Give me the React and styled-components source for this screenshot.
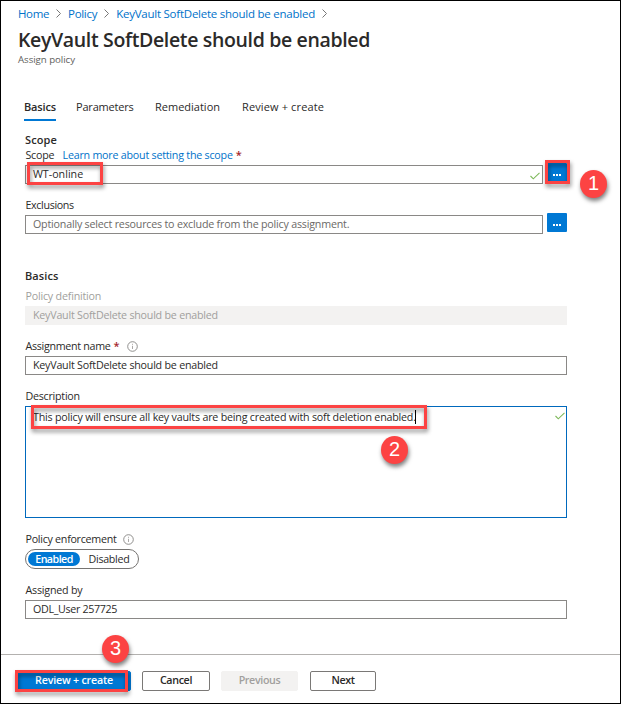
import React from 'react';
import styled, { createGlobalStyle, css } from 'styled-components';

const Global = createGlobalStyle`
  * { box-sizing: border-box; }
  body { margin: 0; background: #fff; }
`;

const Page = styled.main`
  width: 621px;
  height: 704px;
  border: 1px solid #000;
  overflow: hidden;
  display: flex;
  flex-direction: column;
  background: #fff;
  color: #2b2a29;
  font: 10.7px "Open Sans", "Noto Sans", sans-serif;
  white-space: nowrap;
`;

const Text = styled.span`
  letter-spacing: ${(p) => p.$track ?? -0.22}px;
  ${(p) => p.$color && css`color: ${p.$color};`}
`;

const Header = styled.header`
  padding: 3px 17px 0;
`;

const Breadcrumb = styled.nav`
  display: flex;
  align-items: center;
  height: 18px;
  font-size: 11.5px;
  color: #0072c9;
`;

const Separator = styled.svg`
  width: 5px;
  height: 9px;
  margin: 0 7px;
  fill: none;
  stroke: #777;
  stroke-width: 1;
`;

const Title = styled.h1`
  margin: 5px 0 0;
  height: 26px;
  line-height: 26px;
  font-size: 19.5px;
  font-weight: 600;
  letter-spacing: -0.35px;
`;

const Subtitle = styled.div`
  height: 14px;
  line-height: 14px;
  font-size: 9.7px;
  letter-spacing: -0.05px;
  color: #605e5c;
`;

const Tabs = styled.div`
  display: flex;
  gap: 20px;
  margin: 31px 0 0 23px;
`;

const Tab = styled.div`
  height: 23px;
  width: ${(p) => p.$width}px;
  line-height: 18px;
  font-size: 11px;
  font-weight: ${(p) => (p.$active ? 600 : 400)};
  border-bottom: 2px solid ${(p) => (p.$active ? '#0078d4' : 'transparent')};
`;

const Form = styled.section`
  padding: 11px 53px 0 24px;
`;

const SectionHeading = styled.h2`
  margin: ${(p) => p.$top ?? 0}px 0 0;
  height: 16px;
  line-height: 16px;
  font-size: 11px;
  font-weight: 600;
  letter-spacing: 0.1px;
`;

const Label = styled.div`
  display: flex;
  align-items: center;
  height: 14px;
  margin: ${(p) => p.$top ?? 14}px 0 3px;
  padding-left: 0.5px;
  line-height: 14px;
`;

const Required = styled.span`
  margin-left: 3px;
  color: #a4262c;
  font-size: 11px;
  font-weight: 600;
  line-height: 14px;
`;

const Info = styled.svg`
  width: 11px;
  height: 11px;
  margin-left: ${(p) => p.$gap}px;
  fill: none;
  stroke: #858381;
`;

const FieldRow = styled.div`
  display: flex;
  gap: 4px;
  position: relative;
`;

const Field = styled.div`
  flex: 1;
  display: flex;
  align-items: center;
  justify-content: space-between;
  height: 19px;
  padding: 0 2px 0 7px;
  border: 1px solid #8a8886;
  line-height: 15px;
  ${(p) => p.$disabled && css`
    background: #f3f2f1;
    border-color: #f3f2f1;
    color: #a19f9d;
  `}
`;

const TextArea = styled.div`
  position: relative;
  display: flex;
  align-items: flex-start;
  justify-content: space-between;
  height: 112px;
  padding: 3px 1px 0 7px;
  border: 1px solid #0069bd;
  line-height: 15px;
`;

const Caret = styled.i`
  display: inline-block;
  width: 1px;
  height: 14px;
  margin-left: -1px;
  vertical-align: top;
  background: #000;
`;

const Check = styled.svg`
  width: 10px;
  height: 8px;
  margin-top: ${(p) => p.$top ?? 2}px;
  fill: none;
  stroke: #7fb95b;
  stroke-width: 1.1;
`;

const Browse = styled.div`
  display: flex;
  align-items: center;
  justify-content: center;
  gap: 1px;
  width: 20px;
  height: 19px;
  margin-top: -2px;
  padding-top: 5px;
  background: #0078d4;
  border-radius: 1px;
`;

const Dot = styled.i`
  width: 2px;
  height: 2px;
  background: #fff;
`;

const Toggle = styled.div`
  display: flex;
  align-items: center;
  gap: 2px;
  width: 114px;
  height: 20px;
  padding: 0 2px;
  border: 1px solid #767472;
  border-radius: 10px;
`;

const ToggleOption = styled.div`
  width: ${(p) => p.$width}px;
  height: 14px;
  line-height: 14px;
  border-radius: 7px;
  text-align: center;
  ${(p) => p.$on && css`
    background: #0078d4;
    color: #fff;
    font-weight: 600;
  `}
`;

const Footer = styled.footer`
  position: relative;
  display: flex;
  height: 49px;
  margin-top: 35px;
  padding: 16px 0 0 16px;
  border-top: 1px solid #b3b1af;
`;

const variants = {
  primary: css`background: #0078d4; border-color: #0078d4; color: #fff;`,
  normal: css`background: #fff; border-color: #7a7876; color: #2b2a29;`,
  disabled: css`background: #f3f2f1; border-color: #f3f2f1; color: #a19f9d;`,
};

const Button = styled.button`
  width: ${(p) => p.$width}px;
  height: 20px;
  margin: 0 ${(p) => p.$gap ?? 0}px 0 0;
  padding: 0 0 1px;
  border: 1px solid;
  border-radius: 2px;
  font: 600 10.7px/17px "Open Sans", "Noto Sans", sans-serif;
  ${(p) => variants[p.$variant || 'normal']}
`;

const Highlight = styled.div`
  position: absolute;
  z-index: 1;
  left: ${(p) => p.$x}px;
  top: ${(p) => p.$y}px;
  width: ${(p) => p.$w}px;
  height: ${(p) => p.$h}px;
  border: 3px solid #fc4343;
  filter: drop-shadow(1px 3px 2px rgba(0, 0, 0, 0.45));
`;

const Step = styled.div`
  position: absolute;
  z-index: 2;
  left: ${(p) => p.$x}px;
  top: ${(p) => p.$y}px;
  width: 27px;
  height: 28px;
  border-radius: 50%;
  background: #fc4343;
  color: #fff;
  font: 20px/27px "Liberation Sans", Arial, sans-serif;
  text-align: center;
  box-shadow: 1px 3px 4px rgba(0, 0, 0, 0.5);
`;

const Chevron = () => (
  <Separator viewBox="0 0 5 9"><path d="M.5 .5 4.5 4.5 .5 8.5" /></Separator>
);

const Valid = ({ top }) => (
  <Check $top={top} viewBox="0 0 10 8"><path d="M.5 4 3.3 6.8 9.5 .8" /></Check>
);

const InfoIcon = ({ gap }) => (
  <Info $gap={gap} viewBox="0 0 11 11">
    <circle cx="5.5" cy="5.5" r="4.8" strokeWidth=".9" />
    <path d="M5.5 4.8V8M5.5 2.8V3.8" strokeWidth=".7" />
  </Info>
);

const BrowseButton = () => <Browse><Dot /><Dot /><Dot /></Browse>;

export default function App() {
  return (
    <Page>
      <Global />
      <Header>
        <Breadcrumb>
          <Text $track={-0.37}>Home</Text><Chevron />
          <Text $track={-0.3}>Policy</Text><Chevron />
          <Text $track={-0.24}>KeyVault SoftDelete should be enabled</Text><Chevron />
        </Breadcrumb>
        <Title>KeyVault SoftDelete should be enabled</Title>
        <Subtitle>Assign policy</Subtitle>
      </Header>

      <Tabs>
        <Tab $active $width={32}><Text $track={-0.15}>Basics</Text></Tab>
        <Tab $width={59}><Text $track={-0.2}>Parameters</Text></Tab>
        <Tab $width={67}><Text $track={0}>Remediation</Text></Tab>
        <Tab $width={83}><Text $track={0.13}>Review + create</Text></Tab>
      </Tabs>

      <Form>
        <SectionHeading>Scope</SectionHeading>
        <Label $top={0}>
          <Text $track={-0.25}>Scope</Text>
          &nbsp;&nbsp;&nbsp;
          <Text $color="#0072c9">Learn more about setting the scope</Text>
          <Required>*</Required>
        </Label>
        <FieldRow>
          <Field><Text $track={0}>WT-online</Text><Valid /></Field>
          <BrowseButton />
          <Highlight $x={2} $y={-3} $w={76} $h={23} />
          <Highlight $x={520} $y={-5} $w={25} $h={24} />
          <Step $x={555} $y={5}>1</Step>
        </FieldRow>

        <Label><Text $track={-0.35}>Exclusions</Text></Label>
        <FieldRow>
          <Field>
            <Text $track={-0.2} $color="#6b6967">
              Optionally select resources to exclude from the policy assignment.
            </Text>
          </Field>
          <BrowseButton />
        </FieldRow>

        <SectionHeading $top={34}>Basics</SectionHeading>
        <Label $top={5}><Text $track={-0.2} $color="#a19f9d">Policy definition</Text></Label>
        <Field $disabled><Text>KeyVault SoftDelete should be enabled</Text></Field>

        <Label>
          <Text $track={-0.3}>Assignment name</Text><Required>*</Required><InfoIcon gap={8} />
        </Label>
        <Field><Text>KeyVault SoftDelete should be enabled</Text></Field>

        <Label><Text $track={-0.25}>Description</Text></Label>
        <TextArea>
          <span>
            <Text $track={-0.2}>
              This policy will ensure all key vaults are being created with soft deletion enabled.
            </Text>
            <Caret />
          </span>
          <Valid top={2} />
          <Highlight $x={5} $y={-2} $w={396} $h={24} />
          <Step $x={355} $y={29}>2</Step>
        </TextArea>

        <Label><Text $track={-0.27}>Policy enforcement</Text><InfoIcon gap={7} /></Label>
        <Toggle>
          <ToggleOption $on $width={52}><Text $track={-0.55}>Enabled</Text></ToggleOption>
          <ToggleOption $width={54}><Text $track={-0.3}>Disabled</Text></ToggleOption>
        </Toggle>

        <Label><Text $track={-0.2}>Assigned by</Text></Label>
        <Field><Text $track={-0.33}>ODL_User 257725</Text></Field>
      </Form>

      <Footer>
        <Button $variant="primary" $width={114} $gap={11}><Text $track={-0.2}>Review + create</Text></Button>
        <Button $width={68} $gap={11}><Text $track={-0.35}>Cancel</Text></Button>
        <Button $variant="disabled" $width={77} $gap={12} disabled><Text $track={-0.35}>Previous</Text></Button>
        <Button $width={66}><Text $track={-0.4}>Next</Text></Button>
        <Highlight $x={14} $y={15} $w={113} $h={22} />
        <Step $x={101} $y={-20}>3</Step>
      </Footer>
    </Page>
  );
}
